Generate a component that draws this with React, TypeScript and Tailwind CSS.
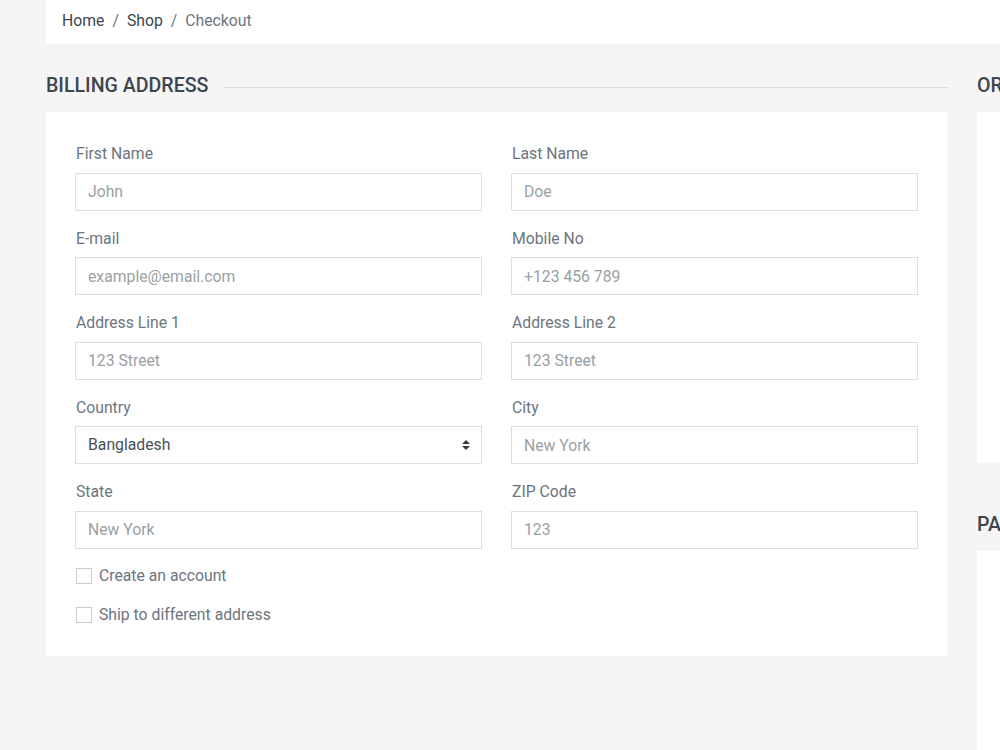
import React from 'react'

const fields: { label: string; placeholder: string; select?: boolean }[][] = [
  [{ label: 'First Name', placeholder: 'John' }, { label: 'Last Name', placeholder: 'Doe' }],
  [{ label: 'E-mail', placeholder: 'example@email.com' }, { label: 'Mobile No', placeholder: '+123 456 789' }],
  [{ label: 'Address Line 1', placeholder: '123 Street' }, { label: 'Address Line 2', placeholder: '123 Street' }],
  [{ label: 'Country', placeholder: 'Bangladesh', select: true }, { label: 'City', placeholder: 'New York' }],
  [{ label: 'State', placeholder: 'New York' }, { label: 'ZIP Code', placeholder: '123' }],
]

function SectionTitle({ text }: { text: string }) {
  return (
    <div className="flex items-center h-6 mb-[14px]">
      <h5 className="text-[19.6px] leading-6 font-medium uppercase text-[#3d464d] whitespace-nowrap">{text}</h5>
      <div className="flex-1 ml-4 border-t border-dotted border-[#c9c9c9] mt-[2px]" />
    </div>
  )
}

function Field({ label, placeholder, select }: { label: string; placeholder: string; select?: boolean }) {
  return (
    <div className="mb-[17px]">
      <label className="block text-[15.75px] leading-[22.5px] text-[#6c757d] mb-[7px] pl-px">{label}</label>
      {select ? (
        <div className="relative">
          <select className="w-full h-[38px] appearance-none border border-[#dadfe3] bg-white px-3 text-[15.75px] text-[#495057] outline-none">
            <option>{placeholder}</option>
            <option>Afghanistan</option>
            <option>Albania</option>
            <option>Algeria</option>
          </select>
          <svg className="absolute right-[12px] top-[14px]" width="8" height="10" viewBox="0 0 4 5">
            <path d="M2 0L0 2h4zm0 5L0 3h4z" fill="#343a40" />
          </svg>
        </div>
      ) : (
        <input
          placeholder={placeholder}
          className="w-full h-[38px] border border-[#dadfe3] bg-white px-3 text-[15.75px] text-[#495057] placeholder:text-[#9a9fa4] outline-none"
        />
      )}
    </div>
  )
}

export default function App() {
  return (
    <div className="w-full min-h-[750px] bg-[#f5f5f5] overflow-hidden" style={{ fontFamily: 'Roboto, "Liberation Sans", sans-serif' }}>
      <div className="w-[1400px] pl-[46px]">
        <nav className="bg-white h-[44px] px-4 pb-0.5 flex items-center text-[15.75px] mb-[30px]">
          <a className="text-[#3d464d]">Home</a>
          <span className="px-2 text-[#6c757d]">/</span>
          <a className="text-[#3d464d]">Shop</a>
          <span className="px-2 text-[#6c757d]">/</span>
          <span className="text-[#6c757d]">Checkout</span>
        </nav>

        <div className="flex gap-[30px]">
          <div className="w-[901px] shrink-0">
            <SectionTitle text="Billing Address" />
            <div className="bg-white px-[29px] pt-[31px] pb-[29px]">
              {fields.map((row, i) => (
                <div key={i} className="grid grid-cols-2 gap-x-[29px]">
                  {row.map(f => (
                    <Field key={f.label} {...f} />
                  ))}
                </div>
              ))}
              <div className="flex flex-col gap-[15px] -mt-[2px] pl-px">
                <label className="flex items-center gap-[7px] h-6 text-[15.75px] text-[#6c757d]">
                  <span className="w-4 h-4 border border-[#c8cdd1] bg-white" />
                  Create an account
                </label>
                <label className="flex items-center gap-[7px] h-6 text-[15.75px] text-[#6c757d]">
                  <span className="w-4 h-4 border border-[#c8cdd1] bg-white" />
                  Ship to different address
                </label>
              </div>
            </div>
          </div>

          <div className="w-[435px] shrink-0">
            <SectionTitle text="Order Total" />
            <div className="bg-white h-[351px] mb-[50px]" />
            <SectionTitle text="Payment" />
            <div className="bg-white h-[260px]" />
          </div>
        </div>
      </div>
    </div>
  )
}
